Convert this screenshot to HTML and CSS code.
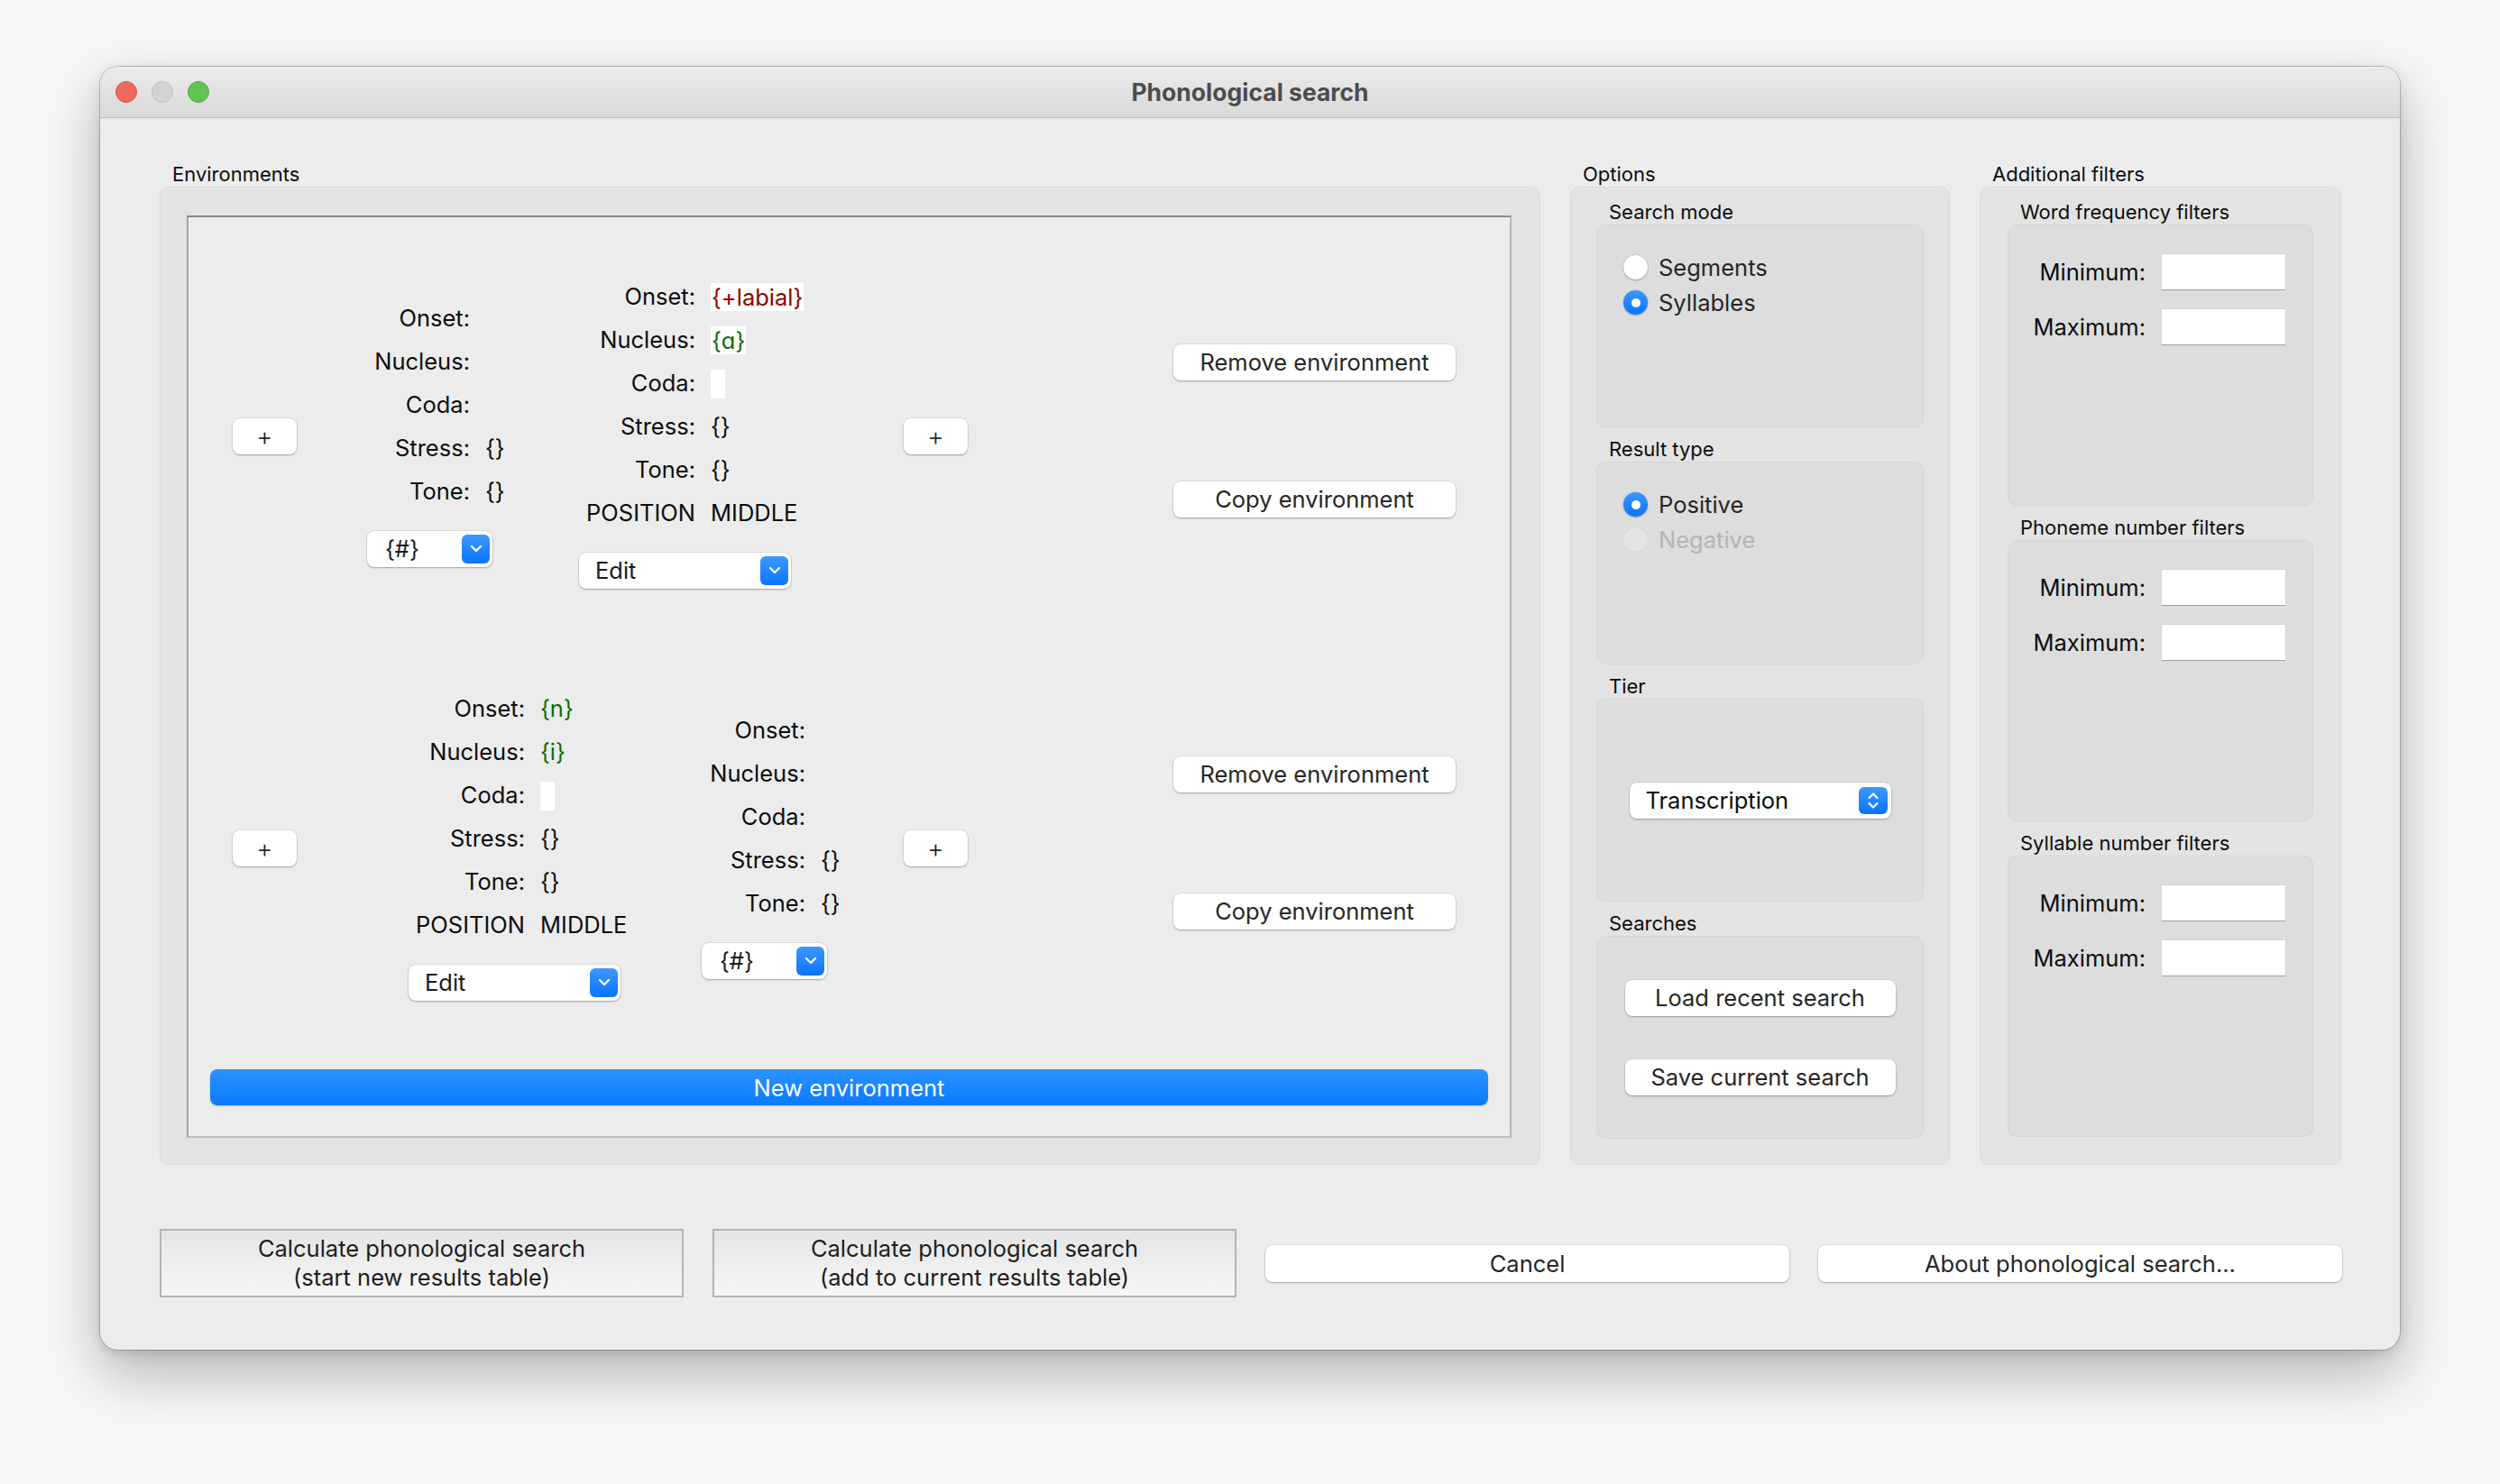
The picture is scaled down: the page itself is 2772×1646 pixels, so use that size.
FILE: index.html
```html
<!DOCTYPE html>
<html>
<head>
<meta charset="utf-8">
<title>Phonological search</title>
<link rel="stylesheet" href="styles.css">
</head>
<body>
<div class="window">
  <div class="titlebar">
    <div class="lights"><span class="light red"></span><span class="light gray"></span><span class="light green"></span></div>
    <div class="title">Phonological search</div>
    <div></div>
  </div>
  <div class="content">
    <div class="top">
      <section class="group env-group">
        <div class="group-label">Environments</div>
        <div class="group-box env-box">
          <div class="scroll">
            <div class="env">
              <button class="btn plus">+</button>
              <div class="col e1c1">
                <div class="form lw106">
                  <span class="lbl">Onset:</span><span class="val"></span>
                  <span class="lbl">Nucleus:</span><span class="val"></span>
                  <span class="lbl">Coda:</span><span class="val"></span>
                  <span class="lbl">Stress:</span><span class="val">{}</span>
                  <span class="lbl">Tone:</span><span class="val">{}</span>
                </div>
                <div class="combo small"><span class="combo-text">{#}</span><span class="combo-btn"><svg width="14" height="9" viewBox="0 0 14 9"><path d="M2 2 L7 7 L12 2" fill="none" stroke="#fff" stroke-width="2.4" stroke-linecap="round" stroke-linejoin="round"/></svg></span></div>
              </div>
              <div class="col e1c2">
                <div class="form lw121">
                  <span class="lbl">Onset:</span><span class="val"><span class="box red-t">{+labial}</span></span>
                  <span class="lbl">Nucleus:</span><span class="val"><span class="box green-t">{ɑ}</span></span>
                  <span class="lbl">Coda:</span><span class="val"><span class="box empty"></span></span>
                  <span class="lbl">Stress:</span><span class="val">{}</span>
                  <span class="lbl">Tone:</span><span class="val">{}</span>
                  <span class="lbl">POSITION</span><span class="val">MIDDLE</span>
                </div>
                <div class="combo wide"><span class="combo-text">Edit</span><span class="combo-btn"><svg width="14" height="9" viewBox="0 0 14 9"><path d="M2 2 L7 7 L12 2" fill="none" stroke="#fff" stroke-width="2.4" stroke-linecap="round" stroke-linejoin="round"/></svg></span></div>
              </div>
              <button class="btn plus">+</button>
              <div class="env-actions">
                <button class="btn action">Remove environment</button>
                <button class="btn action">Copy environment</button>
              </div>
            </div>
            <div class="env">
              <button class="btn plus">+</button>
              <div class="col e2c1">
                <div class="form lw121">
                  <span class="lbl">Onset:</span><span class="val green-t">{n}</span>
                  <span class="lbl">Nucleus:</span><span class="val green-t">{i}</span>
                  <span class="lbl">Coda:</span><span class="val"><span class="box empty"></span></span>
                  <span class="lbl">Stress:</span><span class="val">{}</span>
                  <span class="lbl">Tone:</span><span class="val">{}</span>
                  <span class="lbl">POSITION</span><span class="val">MIDDLE</span>
                </div>
                <div class="combo wide"><span class="combo-text">Edit</span><span class="combo-btn"><svg width="14" height="9" viewBox="0 0 14 9"><path d="M2 2 L7 7 L12 2" fill="none" stroke="#fff" stroke-width="2.4" stroke-linecap="round" stroke-linejoin="round"/></svg></span></div>
              </div>
              <div class="col e2c2">
                <div class="form lw107">
                  <span class="lbl">Onset:</span><span class="val"></span>
                  <span class="lbl">Nucleus:</span><span class="val"></span>
                  <span class="lbl">Coda:</span><span class="val"></span>
                  <span class="lbl">Stress:</span><span class="val">{}</span>
                  <span class="lbl">Tone:</span><span class="val">{}</span>
                </div>
                <div class="combo small"><span class="combo-text">{#}</span><span class="combo-btn"><svg width="14" height="9" viewBox="0 0 14 9"><path d="M2 2 L7 7 L12 2" fill="none" stroke="#fff" stroke-width="2.4" stroke-linecap="round" stroke-linejoin="round"/></svg></span></div>
              </div>
              <button class="btn plus">+</button>
              <div class="env-actions">
                <button class="btn action">Remove environment</button>
                <button class="btn action">Copy environment</button>
              </div>
            </div>
            <button class="new-env">New environment</button>
          </div>
        </div>
      </section>

      <section class="group opt-group">
        <div class="group-label">Options</div>
        <div class="group-box sub-holder">
          <div class="sub">
            <div class="sub-label">Search mode</div>
            <div class="sub-box radios">
              <div class="radio"><span class="dot"></span><span>Segments</span></div>
              <div class="radio"><span class="dot on"></span><span>Syllables</span></div>
            </div>
          </div>
          <div class="sub">
            <div class="sub-label">Result type</div>
            <div class="sub-box radios">
              <div class="radio"><span class="dot on"></span><span>Positive</span></div>
              <div class="radio disabled"><span class="dot"></span><span>Negative</span></div>
            </div>
          </div>
          <div class="sub">
            <div class="sub-label">Tier</div>
            <div class="sub-box centered">
              <div class="combo tier"><span class="combo-text">Transcription</span><span class="combo-btn stepper"><svg width="14" height="22" viewBox="0 0 14 22"><path d="M2.5 8 L7 3.5 L11.5 8 M2.5 14 L7 18.5 L11.5 14" fill="none" stroke="#fff" stroke-width="2.2" stroke-linecap="round" stroke-linejoin="round"/></svg></span></div>
            </div>
          </div>
          <div class="sub">
            <div class="sub-label">Searches</div>
            <div class="sub-box centered searches">
              <button class="btn search-btn">Load recent search</button>
              <button class="btn search-btn">Save current search</button>
            </div>
          </div>
        </div>
      </section>

      <section class="group add-group">
        <div class="group-label">Additional filters</div>
        <div class="group-box sub-holder add-holder">
          <div class="sub">
            <div class="sub-label">Word frequency filters</div>
            <div class="sub-box filter">
              <div class="filter-form">
                <span class="lbl">Minimum:</span><span class="input"></span>
                <span class="lbl">Maximum:</span><span class="input"></span>
              </div>
            </div>
          </div>
          <div class="sub">
            <div class="sub-label">Phoneme number filters</div>
            <div class="sub-box filter">
              <div class="filter-form">
                <span class="lbl">Minimum:</span><span class="input"></span>
                <span class="lbl">Maximum:</span><span class="input"></span>
              </div>
            </div>
          </div>
          <div class="sub">
            <div class="sub-label">Syllable number filters</div>
            <div class="sub-box filter">
              <div class="filter-form">
                <span class="lbl">Minimum:</span><span class="input"></span>
                <span class="lbl">Maximum:</span><span class="input"></span>
              </div>
            </div>
          </div>
        </div>
      </section>
    </div>

    <div class="bottom">
      <button class="calc">Calculate phonological search<br>(start new results table)</button>
      <button class="calc">Calculate phonological search<br>(add to current results table)</button>
      <button class="btn wide-btn">Cancel</button>
      <button class="btn wide-btn">About phonological search...</button>
    </div>
  </div>
</div>
</body>
</html>
```

FILE: styles.css
```css
html, body {
  margin: 0;
  padding: 0;
}
body {
  background: #f7f7f7;
  font-family: Inter, "Liberation Sans", sans-serif;
  font-size: 25.5px;
  color: #0d0d0d;
  width: 2772px;
  height: 1646px;
  overflow: hidden;
}
button {
  font-family: inherit;
  font-size: inherit;
  margin: 0;
  padding: 0;
  border: none;
  cursor: default;
}

.window {
  margin: 74px 0 0 111px;
  width: 2550px;
  height: 1423px;
  border-radius: 20px;
  background: #ececec;
  box-shadow: 0 0 0 1px rgba(0,0,0,0.2), 0 26px 64px rgba(0,0,0,0.28), 0 4px 14px rgba(0,0,0,0.12);
  overflow: hidden;
  display: flex;
  flex-direction: column;
}

.titlebar {
  height: 56px;
  flex: none;
  background: linear-gradient(#ebebeb, #d9d9d9);
  border-bottom: 1px solid #bcbcbc;
  display: grid;
  grid-template-columns: 1fr auto 1fr;
  align-items: center;
}
.lights {
  display: flex;
  gap: 16px;
  padding-left: 17px;
}
.light {
  width: 24px;
  height: 24px;
  border-radius: 50%;
  box-sizing: border-box;
}
.light.red { background: #ee6a5f; border: 1px solid #d5574d; }
.light.gray { background: #d3d3d3; border: 1px solid #c0c0c0; }
.light.green { background: #61c554; border: 1px solid #50ab44; }
.title {
  font-weight: 700;
  font-size: 26.5px;
  color: #4c4c4c;
}

.content {
  flex: 1;
  padding: 48px 65px 58px 66px;
  display: flex;
  flex-direction: column;
}

.top {
  display: flex;
  height: 1113px;
}
.group { display: flex; flex-direction: column; }
.env-group { width: 1531px; }
.opt-group { width: 421px; margin-left: 33px; }
.add-group { width: 401px; margin-left: 33px; }

.group-label {
  height: 28px;
  line-height: 28px;
  font-size: 22px;
  padding-left: 14px;
  color: #0d0d0d;
}
.group-box {
  height: 1085px;
  box-sizing: border-box;
  background: #e3e3e3;
  border: 1px solid #dadada;
  border-radius: 10px;
}

/* Environments */
.env-box {
  padding: 31px 31px 29px 29px;
}
.scroll {
  width: 1469px;
  height: 1023px;
  box-sizing: border-box;
  background: #ececec;
  border-style: solid;
  border-width: 2px;
  border-color: #8a8a8a #b4b4b4 #bcbcbc #a5a5a5;
  padding: 14px 24px 0 0;
  display: flex;
  flex-direction: column;
}
.env {
  height: 457px;
  display: flex;
  align-items: center;
}
.btn {
  background: #fff;
  border-radius: 8px;
  height: 40px;
  color: #262626;
  box-shadow: 0 0 0 0.5px rgba(0,0,0,0.12), 0 1px 2px rgba(0,0,0,0.28);
  text-align: center;
  line-height: 40px;
}
.plus {
  width: 71px;
  flex: none;
  font-size: 28px;
  font-weight: 300;
}
.env > .plus:first-child { margin-left: 49px; }

.col {
  display: flex;
  flex-direction: column;
  align-items: flex-start;
  margin-bottom: 10px;
  flex: none;
}
.e1c1 { margin-left: 78px; width: 235px; }
.e1c2 { width: 360px; }
.e2c1 { margin-left: 124px; width: 325px; }
.e2c2 { width: 224px; }

.form {
  display: grid;
  column-gap: 17px;
  grid-auto-rows: 48px;
  align-items: center;
  margin-left: 8px;
}
.form.lw106 { grid-template-columns: 106px auto; }
.form.lw107 { grid-template-columns: 107px auto; }
.form.lw121 { grid-template-columns: 121px auto; }
.lbl {
  justify-self: end;
  white-space: nowrap;
}
.val { white-space: nowrap; }
.box {
  display: inline-block;
  background: #fff;
  height: 31px;
  line-height: 31px;
  padding: 0 1px;
  vertical-align: middle;
}
.box.empty { width: 16px; height: 32px; padding: 0; }
.red-t { color: #8f0000; }
.green-t { color: #0a6b0a; }

.combo {
  margin-top: 20px;
  height: 40px;
  box-sizing: border-box;
  background: #fff;
  border-radius: 8px;
  box-shadow: 0 0 0 0.5px rgba(0,0,0,0.12), 0 1px 2px rgba(0,0,0,0.28);
  display: flex;
  align-items: center;
  justify-content: space-between;
  padding: 0 3px 0 20px;
  color: #1a1a1a;
}
.combo.small { width: 139px; }
.combo.wide { width: 235px; padding-left: 18px; }
.combo-btn {
  width: 31px;
  height: 32px;
  border-radius: 6px;
  background: linear-gradient(#3d98ff, #0a74ff);
  display: flex;
  align-items: center;
  justify-content: center;
}

.env-actions {
  margin-left: 228px;
  width: 313px;
  display: flex;
  flex-direction: column;
  gap: 112px;
  margin-bottom: 12px;
}
.action { width: 313px; }

.new-env {
  margin: 17px 0 0 24px;
  height: 40px;
  border-radius: 8px;
  background: linear-gradient(#2b92ff, #0a7aff);
  color: #fff;
  box-shadow: 0 1px 2px rgba(0,0,0,0.2);
  flex: none;
}

/* Options & additional */
.sub-holder {
  padding: 13px 28px 0 28px;
  display: flex;
  flex-direction: column;
  gap: 10px;
}
.add-holder { padding-left: 30px; padding-right: 30px; }
.sub { display: flex; flex-direction: column; }
.sub-label {
  height: 28px;
  line-height: 28px;
  font-size: 22px;
  padding-left: 14px;
  color: #0d0d0d;
}
.sub-box {
  height: 225px;
  box-sizing: border-box;
  background: #dddddd;
  border: 1px solid #d5d5d5;
  border-radius: 10px;
}
.radios {
  padding: 27px 0 0 29px;
}
.radio {
  display: flex;
  align-items: center;
  height: 39px;
  color: #262626;
}
.dot {
  width: 27px;
  height: 27px;
  border-radius: 50%;
  box-sizing: border-box;
  background: #fff;
  box-shadow: 0 0 0 0.5px rgba(0,0,0,0.15), 0 1px 2px rgba(0,0,0,0.22);
  margin-right: 12px;
  display: flex;
  align-items: center;
  justify-content: center;
}
.dot.on { background: linear-gradient(#3b97ff, #0a74ff); }
.dot.on::after {
  content: "";
  width: 10px;
  height: 10px;
  border-radius: 50%;
  background: #fff;
}
.radio.disabled { color: #b4b4b4; }
.radio.disabled .dot {
  background: #e4e4e4;
  box-shadow: 0 0 0 0.5px rgba(0,0,0,0.06);
}
.centered {
  display: flex;
  flex-direction: column;
  align-items: center;
  justify-content: center;
}
.combo.tier {
  margin-top: 0;
  width: 290px;
  padding-left: 18px;
  padding-right: 4px;
  color: #0d0d0d;
}
.stepper { width: 32px; height: 30px; }
.searches { gap: 48px; }
.search-btn { width: 300px; }

.filter { height: 312px; padding: 32px 0 0 30px; }
.filter-form {
  display: grid;
  grid-template-columns: 122px 137px;
  column-gap: 18px;
  row-gap: 22px;
  grid-auto-rows: 39px;
  align-items: center;
}
.input {
  height: 39px;
  background: #fff;
  box-shadow: 0 1px 0 rgba(0,0,0,0.25), 0 0 0 0.5px rgba(0,0,0,0.08);
}

/* Bottom row */
.bottom {
  margin-top: 71px;
  display: flex;
  align-items: center;
  gap: 32px;
}
.bottom > * { flex: none; width: 581px; }
.calc {
  height: 76px;
  box-sizing: border-box;
  border: 2px solid #b3b3b3;
  background: linear-gradient(#e5e5e5, #f6f6f6);
  color: #1e1e1e;
  line-height: 32px;
  text-align: center;
}
.wide-btn { height: 41px; line-height: 41px; }
```
